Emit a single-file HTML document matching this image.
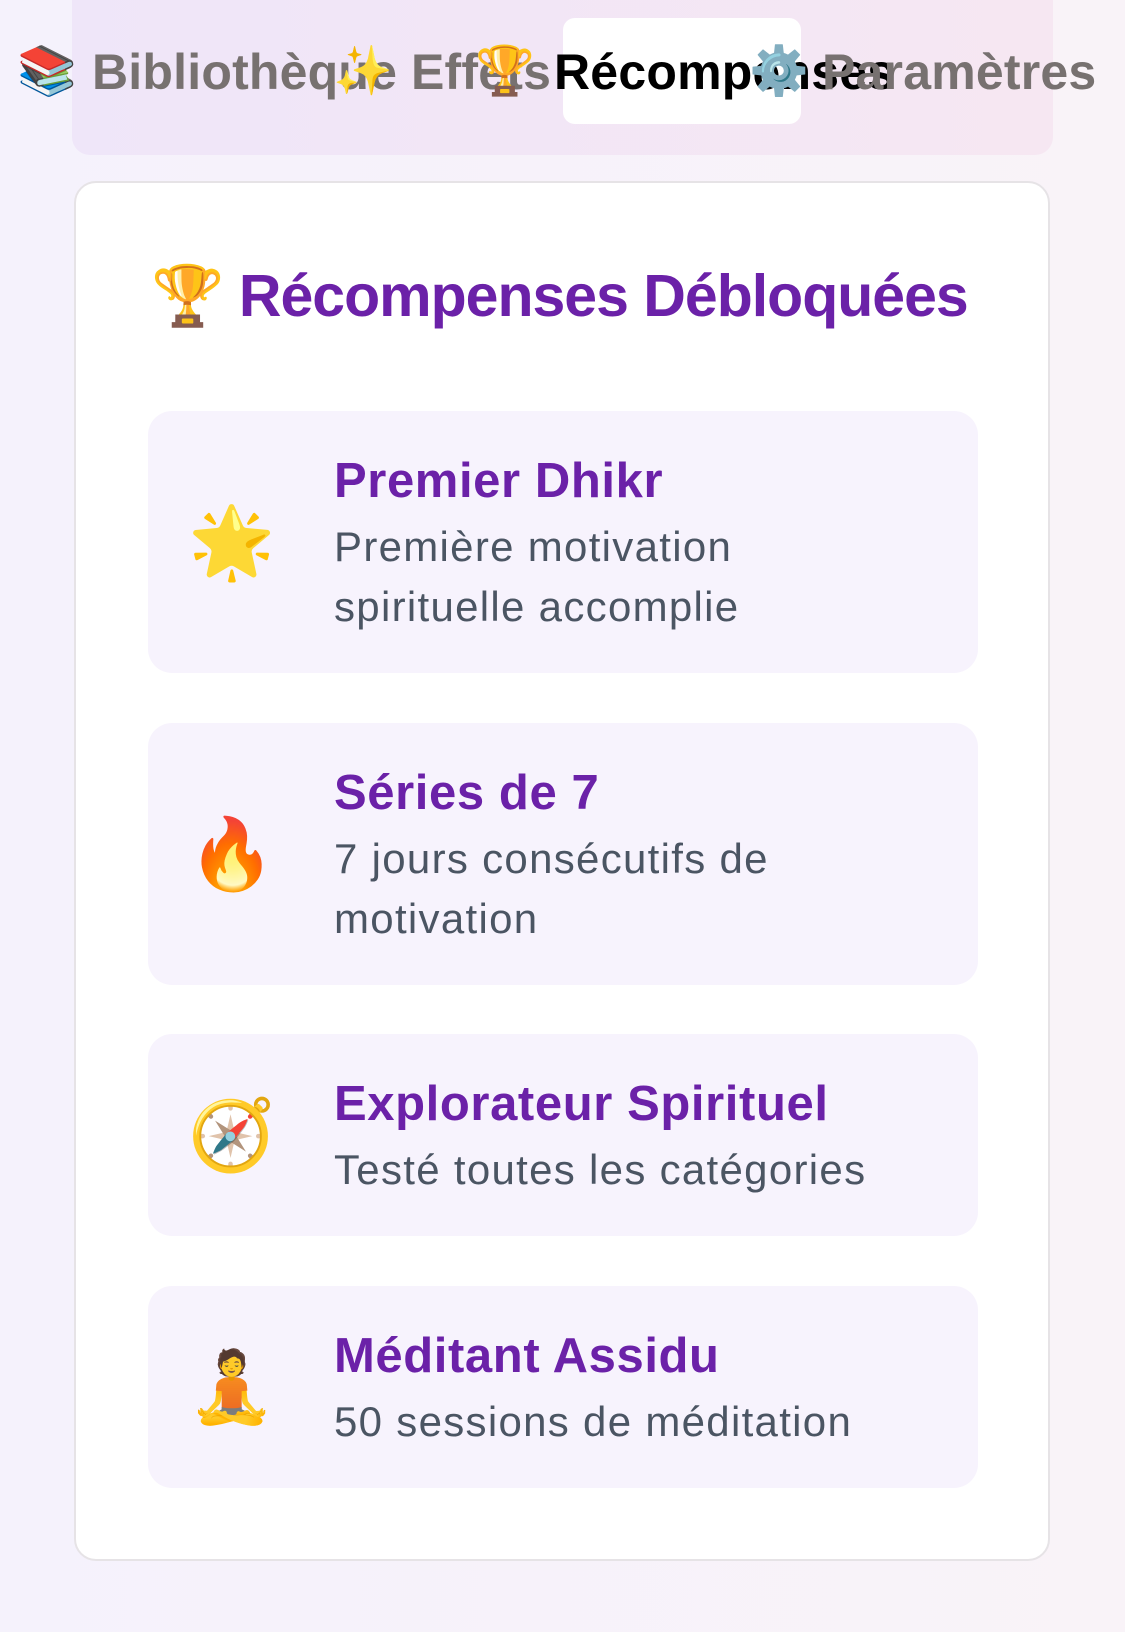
<!DOCTYPE html>
<html><head><meta charset="utf-8"><style>
*{margin:0;padding:0;box-sizing:border-box}
html,body{width:1125px;height:1632px;overflow:hidden}
body{background:linear-gradient(90deg,#f5f2fc,#f9f3f8);font-family:"Liberation Sans","DejaVu Sans",sans-serif;position:relative}
.tabs{position:absolute;left:72px;top:0;width:981px;height:155px;border-radius:0 0 18px 18px;background:linear-gradient(90deg,#efe6f9,#f6e7f2)}
.active{position:absolute;left:563px;top:18px;width:238px;height:106px;background:#fff;border-radius:12px}
.t{position:absolute;top:42px;font-size:50px;font-weight:bold;color:#777170;letter-spacing:0.2px;white-space:nowrap;line-height:60px}
.e{position:absolute;top:42px;font-size:48px;line-height:60px}
.card{position:absolute;left:74px;top:181px;width:976px;height:1380px;background:#fff;border:2px solid #e6e3e6;border-radius:22px}
.h{position:absolute;left:151px;top:256px;font-size:59px;font-weight:bold;color:#6b21a8;letter-spacing:-1px;white-space:nowrap;line-height:80px}
.item{position:absolute;left:148px;width:830px;background:#f7f3fd;border-radius:24px;padding:40px 0 36px 186px}
.ic{position:absolute;left:40px;top:50%;transform:translateY(-50%);width:86px;text-align:center;font-size:70px;line-height:90px}
.it{font-size:49px;font-weight:bold;color:#6b21a8;line-height:60px;letter-spacing:0.6px}
.d{font-size:42px;color:#4b5563;line-height:60px;margin-top:6px;width:500px;letter-spacing:1.3px}
</style></head><body>
<div class="tabs"></div>
<div class="active"></div>
<span class="e" style="left:17px">📚</span>
<span class="t" style="left:92px">Bibliothèque</span>
<span class="e" style="left:333px">✨</span>
<span class="t" style="left:411px">Effets</span>
<span class="e" style="left:475px">🏆</span>
<span class="t" style="left:554px;color:#000">Récompenses</span>
<span class="e" style="left:749px">⚙️</span>
<span class="t" style="left:822px">Paramètres</span>
<div class="card"></div>
<div class="h">🏆 Récompenses Débloquées</div>
<div class="item" style="top:411px"><div class="ic">🌟</div><div class="it">Premier Dhikr</div><div class="d">Première motivation spirituelle accomplie</div></div>
<div class="item" style="top:723px"><div class="ic">🔥</div><div class="it">Séries de 7</div><div class="d">7 jours consécutifs de motivation</div></div>
<div class="item" style="top:1034px"><div class="ic">🧭</div><div class="it">Explorateur Spirituel</div><div class="d" style="width:640px">Testé toutes les catégories</div></div>
<div class="item" style="top:1286px"><div class="ic">🧘</div><div class="it">Méditant Assidu</div><div class="d" style="width:640px">50 sessions de méditation</div></div>
</body></html>
